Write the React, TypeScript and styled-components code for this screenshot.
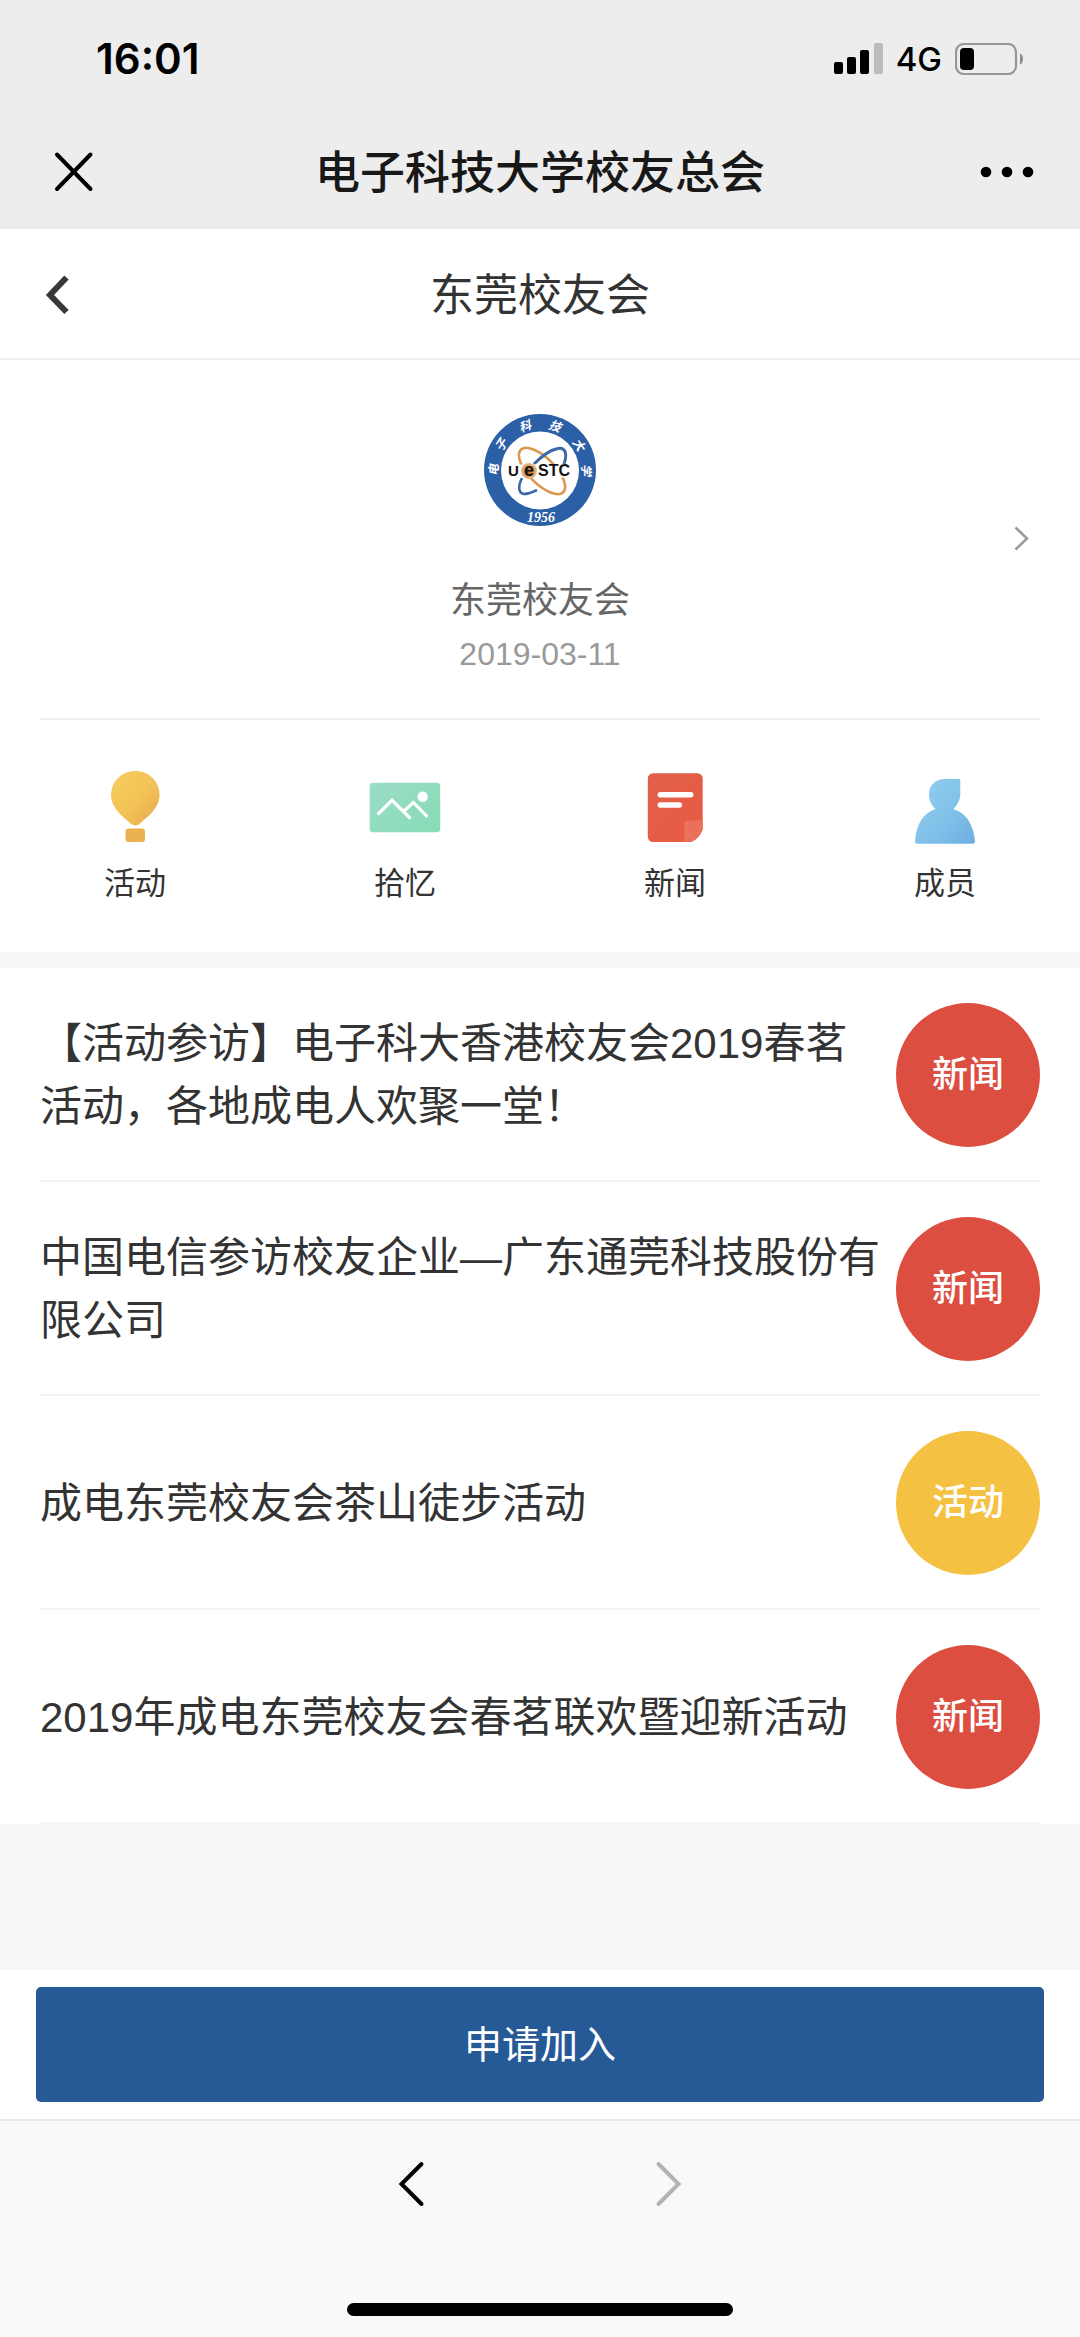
import React from "react";
import styled, { createGlobalStyle } from "styled-components";

const GlobalStyle = createGlobalStyle`
  *, *::before, *::after { box-sizing: border-box; }
  body {
    margin: 0;
    background: #f6f6f7;
    color: #333;
    font-family: "Liberation Sans", "Noto Sans CJK SC", sans-serif;
  }
  button {
    margin: 0;
    padding: 0;
    border: 0;
    background: none;
    color: inherit;
    font: inherit;
    cursor: pointer;
  }
  a { color: inherit; text-decoration: none; }
  h1, h2, p, ul { margin: 0; padding: 0; font-weight: 400; }
  ul { list-style: none; }
  svg { display: block; flex: none; }
`;

const Page = styled.div`
  display: flex;
  flex-direction: column;
  min-height: 100vh;
`;

const StatusBar = styled.div`
  display: flex;
  align-items: center;
  justify-content: space-between;
  height: 118px;
  padding: 0 56px 0 96px;
  background: #ededed;
  color: #000;
  font-family: Inter, "Liberation Sans", sans-serif;
`;

const Clock = styled.time`
  font-size: 42px;
  font-weight: 600;
  line-height: 48px;
`;

const StatusIcons = styled.div`
  display: flex;
  align-items: center;
  gap: 13px;
`;

const Network = styled.span`
  font-size: 33px;
  font-weight: 500;
  line-height: 40px;
`;

const TitleBar = styled.header<{ $tone: "chrome" | "page" }>`
  display: grid;
  grid-template-columns: 1fr auto 1fr;
  align-items: center;
  height: ${(p) => (p.$tone === "chrome" ? 111 : 131)}px;
  padding: ${(p) => (p.$tone === "chrome" ? "0 44px 4px" : "0 44px")};
  background: ${(p) => (p.$tone === "chrome" ? "#ededed" : "#fff")};
  border-bottom: ${(p) => (p.$tone === "chrome" ? "0" : "2px solid #efefef")};
`;

const AppTitle = styled.h1`
  grid-column: 2;
  padding-top: 4px;
  color: #181818;
  font-size: 45px;
  font-weight: 500;
  line-height: 64px;
`;

const PageTitle = styled.h2`
  grid-column: 2;
  padding-top: 4px;
  font-size: 44px;
  line-height: 64px;
`;

const IconButton = styled.button<{ $side?: "start" | "end" }>`
  display: flex;
  justify-self: ${(p) => p.$side ?? "center"};
`;

const Panel = styled.section`
  background: #fff;
`;

const Profile = styled.a`
  display: grid;
  grid-template-columns: 1fr auto 1fr;
  align-items: center;
  margin: 0 40px;
  padding: 0 10px;
  border-bottom: 2px solid #f0f0f0;
`;

const ProfileBody = styled.div`
  display: flex;
  grid-column: 2;
  flex-direction: column;
  align-items: center;
  padding: 54px 0 38px;
`;

const ProfileName = styled.p`
  margin-top: 48px;
  color: #666;
  font-size: 36px;
  line-height: 54px;
`;

const ProfileDate = styled.time`
  color: #999;
  font-size: 32px;
  line-height: 52px;
`;

const ProfileArrow = styled.span`
  justify-self: end;
`;

const Shortcuts = styled.nav`
  display: grid;
  grid-template-columns: repeat(4, 1fr);
  padding: 48px 0 44px;
`;

const Shortcut = styled.a`
  display: flex;
  flex-direction: column;
  align-items: center;
  gap: 12px;
  font-size: 31px;
  line-height: 48px;
`;

const Feed = styled.ul`
  margin-top: 16px;
  padding: 0 40px;
  background: #fff;
`;

const FeedItem = styled.li`
  padding-top: 2px;
  border-bottom: 2px solid #f4f4f4;

  &:last-child { border-bottom-color: #f6f6f7; }
`;

const FeedLink = styled.a`
  display: flex;
  align-items: center;
  justify-content: space-between;
  gap: 16px;
  min-height: 210px;
`;

const FeedTitle = styled.span`
  flex: 1;
  min-width: 0;
  font-size: 42px;
  line-height: 63px;
`;

type Kind = "新闻" | "活动";

const Badge = styled.span<{ $kind: Kind }>`
  display: flex;
  flex: none;
  align-items: center;
  justify-content: center;
  width: 144px;
  height: 144px;
  border-radius: 50%;
  background: ${(p) => (p.$kind === "新闻" ? "#dc4e40" : "#f4c142")};
  color: #fff;
  font-size: 36px;
  font-weight: 500;
  line-height: 54px;
`;

const JoinBar = styled.div`
  margin-top: auto;
  padding: 17px 36px;
  background: #fff;
`;

const JoinButton = styled.button`
  width: 100%;
  height: 115px;
  border-radius: 5px;
  background: #265a96;
  color: #fff;
  font-size: 38px;
  line-height: 56px;
`;

const BrowserBar = styled.footer`
  display: flex;
  flex-direction: column;
  align-items: center;
  justify-content: space-between;
  height: 218px;
  padding: 39px 0 21px;
  border-top: 2px solid #e8e8e9;
  background: #f9f9f9;
`;

const BrowserNav = styled.nav`
  display: flex;
  gap: 230px;
`;

const HomeIndicator = styled.div`
  width: 386px;
  height: 13px;
  border-radius: 7px;
  background: #000;
`;

const Signal = () => (
  <svg width="49" height="32" viewBox="0 0 49 32" aria-hidden="true">
    <rect x="0" y="19" width="9" height="12" rx="2" />
    <rect x="13" y="14" width="9" height="17" rx="2" />
    <rect x="26" y="7" width="9" height="24" rx="2" />
    <rect x="40" y="0" width="9" height="31" rx="2" fill="#bcbcbc" />
  </svg>
);

const Battery = () => (
  <svg width="69" height="32" viewBox="0 0 69 32" aria-hidden="true">
    <rect x="1" y="1" width="60" height="30" rx="8" fill="none" stroke="#979797" strokeWidth="2.2" />
    <rect x="5" y="5" width="14" height="22" rx="4" />
    <path d="M65 10.5c2 .8 3 3 3 5.500s-1 4.700-3 5.500z" fill="#8c8c8c" />
  </svg>
);

const CloseIcon = () => (
  <svg width="60" height="60" viewBox="0 0 60 60" aria-hidden="true">
    <path d="M13 12.500 46.500 47M46.500 12.500 13 47" fill="none" stroke="#000" strokeWidth="4" strokeLinecap="round" />
  </svg>
);

const MoreIcon = () => (
  <svg width="60" height="60" viewBox="0 0 60 60" aria-hidden="true">
    <circle cx="10" cy="30" r="5.300" />
    <circle cx="31" cy="30" r="5.300" />
    <circle cx="52" cy="30" r="5.300" />
  </svg>
);

const BackIcon = () => (
  <svg width="40" height="60" viewBox="0 0 40 60" aria-hidden="true">
    <path d="M22.500 13.500 6 31 22.500 48" fill="none" stroke="#383838" strokeWidth="6" strokeLinejoin="miter" strokeLinecap="butt" />
  </svg>
);

const ArrowIcon = () => (
  <svg width="16" height="26" viewBox="0 0 16 26" aria-hidden="true">
    <path d="M1.500 1.500 13 12.500 1.500 23.500" fill="none" stroke="#999" strokeWidth="2.500" />
  </svg>
);

const NavIcon = ({ forward = false }: { forward?: boolean }) => (
  <svg width="28" height="48" viewBox="0 0 28 48" aria-hidden="true">
    <path
      d={forward ? "M3.500 4 23.500 24 3.500 44" : "M24.500 4 4.500 24 24.500 44"}
      fill="none"
      stroke={forward ? "#b3b3b3" : "#000"}
      strokeWidth="4"
      strokeLinecap="round"
    />
  </svg>
);

const ringLetters: [string, number][] = [
  ["电", -90],
  ["子", -57],
  ["科", -19],
  ["技", 19],
  ["大", 57],
  ["学", 90],
];

const Crest = () => (
  <svg width="112" height="112" viewBox="0 0 112 112" role="img" aria-label="电子科技大学">
    <defs>
      <radialGradient id="core">
        <stop offset="0.300" stopColor="#c9782f" />
        <stop offset="1" stopColor="#e9bf94" />
      </radialGradient>
    </defs>
    <circle cx="56" cy="56" r="56" fill="#2c60a6" />
    <circle cx="56" cy="56.500" r="39" fill="#fff" />
    <g fill="none" strokeWidth="2.600">
      <ellipse cx="58" cy="57" rx="30" ry="13" transform="rotate(45 58 57)" stroke="#dd964f" />
      <path d="M80 50C84 39 81 32 72 35 64 37 56 44 50 50" stroke="#3c68a8" strokeWidth="3" />
      <path d="M38 64C34 72 34 79 40 80 45 80 49 78 53 76" stroke="#3c68a8" />
    </g>
    <path d="M24 50.500h63v13H24z" fill="#fff" />
    <circle cx="45" cy="57" r="8" fill="url(#core)" />
    <g fill="#111" fontFamily="'Liberation Sans', sans-serif" fontWeight="700" fontSize="15">
      <text x="24" y="62">U</text>
      <text x="40" y="62" fontSize="18">e</text>
      <text x="54" y="62" fontSize="16">STC</text>
    </g>
    <g fill="#fff" textAnchor="middle">
      {ringLetters.map(([letter, angle]) => (
        <text
          key={letter}
          x="56"
          y="14"
          transform={`rotate(${angle} 56 56)`}
          fontFamily="'Noto Sans CJK SC', sans-serif"
          fontStyle="italic"
          fontWeight="700"
          fontSize="12"
        >
          {letter}
        </text>
      ))}
      <text x="57" y="108" fontFamily="'Liberation Serif', serif" fontStyle="italic" fontWeight="700" fontSize="14">
        1956
      </text>
    </g>
  </svg>
);

const BalloonIcon = () => (
  <svg width="80" height="80" viewBox="0 0 80 80" aria-hidden="true">
    <defs>
      <linearGradient id="balloon" x1="0" y1="0" x2="1" y2="1">
        <stop offset="0" stopColor="#f5cd60" />
        <stop offset="0.500" stopColor="#f3c458" />
        <stop offset="1" stopColor="#eaa850" />
      </linearGradient>
    </defs>
    <path
      d="M40.300 3C54 3 64.500 13.500 64.500 27c0 9-5.500 15.500-11 21l-8.500 7.500c-3 2.500-6.500 2.500-9.500 0L27 48C21.500 42.500 16 36 16 27 16 13.500 26.600 3 40.300 3z"
      fill="url(#balloon)"
    />
    <rect x="30.500" y="60.500" width="19.500" height="13.500" rx="3" fill="#ebb050" />
  </svg>
);

const PhotoIcon = () => (
  <svg width="80" height="80" viewBox="0 0 80 80" aria-hidden="true">
    <defs>
      <linearGradient id="photo" x1="0" y1="0" x2="1" y2="1">
        <stop offset="0" stopColor="#9bdcc6" />
        <stop offset="1" stopColor="#86dcb6" />
      </linearGradient>
    </defs>
    <rect x="4.700" y="14.700" width="70.500" height="49.600" rx="3.500" fill="url(#photo)" />
    <path d="M12.500 46.500 27 32.300 45.500 50.500M38.500 43.500l9.800-9L62.500 49" fill="none" stroke="#fff" strokeWidth="3.200" />
    <circle cx="57.700" cy="28.700" r="5.200" fill="#fff" />
  </svg>
);

const DocumentIcon = () => (
  <svg width="80" height="80" viewBox="0 0 80 80" aria-hidden="true">
    <defs>
      <linearGradient id="document" x1="0" y1="0" x2="1" y2="1">
        <stop offset="0" stopColor="#e0604a" />
        <stop offset="1" stopColor="#ea5a44" />
      </linearGradient>
    </defs>
    <path
      d="M18 5.300h44.500a5.200 5.200 0 0 1 5.200 5.200V61c-2 6-6 11-12 13H18a5.200 5.200 0 0 1-5.200-5.200V10.500A5.200 5.200 0 0 1 18 5.300z"
      fill="url(#document)"
    />
    <path d="M49.300 74V56.500q0-4 4-4h14.400V61c-2 6-6 11-12 13z" fill="#ea705c" />
    <path d="M25.300 26.700h30.500M25.300 37h19" stroke="#fff" strokeWidth="5.400" strokeLinecap="round" />
  </svg>
);

const PersonIcon = () => (
  <svg width="80" height="80" viewBox="0 0 80 80" aria-hidden="true">
    <defs>
      <linearGradient id="person" x1="0" y1="0" x2="1" y2="1">
        <stop offset="0" stopColor="#92d0f0" />
        <stop offset="0.500" stopColor="#83c3ea" />
        <stop offset="1" stopColor="#6eaee2" />
      </linearGradient>
    </defs>
    <path
      d="M40 11h13.500q1.800 0 1.800 1.800V26c0 6-3 11-7 15 12 3.500 20 14 21.700 32q.3 2.700-2.500 2.700h-55q-2.700 0-2.500-2.700C11.500 55 19 44.500 30.500 41 26 37 24 32 24 26c0-9 7-15 16-15z"
      fill="url(#person)"
    />
  </svg>
);

const shortcuts = [
  { label: "活动", Icon: BalloonIcon },
  { label: "拾忆", Icon: PhotoIcon },
  { label: "新闻", Icon: DocumentIcon },
  { label: "成员", Icon: PersonIcon },
];

const feed: { title: string; kind: Kind }[] = [
  { title: "【活动参访】电子科大香港校友会2019春茗活动，各地成电人欢聚一堂！", kind: "新闻" },
  { title: "中国电信参访校友企业—广东通莞科技股份有限公司", kind: "新闻" },
  { title: "成电东莞校友会茶山徒步活动", kind: "活动" },
  { title: "2019年成电东莞校友会春茗联欢暨迎新活动", kind: "新闻" },
];

export default function App() {
  return (
    <Page lang="zh-CN">
      <GlobalStyle />
      <StatusBar>
        <Clock>16:01</Clock>
        <StatusIcons>
          <Signal />
          <Network>4G</Network>
          <Battery />
        </StatusIcons>
      </StatusBar>
      <TitleBar $tone="chrome">
        <IconButton $side="start" aria-label="关闭">
          <CloseIcon />
        </IconButton>
        <AppTitle>电子科技大学校友总会</AppTitle>
        <IconButton $side="end" aria-label="更多">
          <MoreIcon />
        </IconButton>
      </TitleBar>
      <TitleBar $tone="page">
        <IconButton $side="start" aria-label="返回">
          <BackIcon />
        </IconButton>
        <PageTitle>东莞校友会</PageTitle>
      </TitleBar>
      <Panel>
        <Profile href="#profile">
          <ProfileBody>
            <Crest />
            <ProfileName>东莞校友会</ProfileName>
            <ProfileDate>2019-03-11</ProfileDate>
          </ProfileBody>
          <ProfileArrow>
            <ArrowIcon />
          </ProfileArrow>
        </Profile>
        <Shortcuts>
          {shortcuts.map(({ label, Icon }) => (
            <Shortcut key={label} href={`#${label}`}>
              <Icon />
              {label}
            </Shortcut>
          ))}
        </Shortcuts>
      </Panel>
      <Feed>
        {feed.map(({ title, kind }) => (
          <FeedItem key={title}>
            <FeedLink href="#article">
              <FeedTitle>{title}</FeedTitle>
              <Badge $kind={kind}>{kind}</Badge>
            </FeedLink>
          </FeedItem>
        ))}
      </Feed>
      <JoinBar>
        <JoinButton>申请加入</JoinButton>
      </JoinBar>
      <BrowserBar>
        <BrowserNav>
          <IconButton aria-label="后退">
            <NavIcon />
          </IconButton>
          <IconButton aria-label="前进" disabled>
            <NavIcon forward />
          </IconButton>
        </BrowserNav>
        <HomeIndicator />
      </BrowserBar>
    </Page>
  );
}
